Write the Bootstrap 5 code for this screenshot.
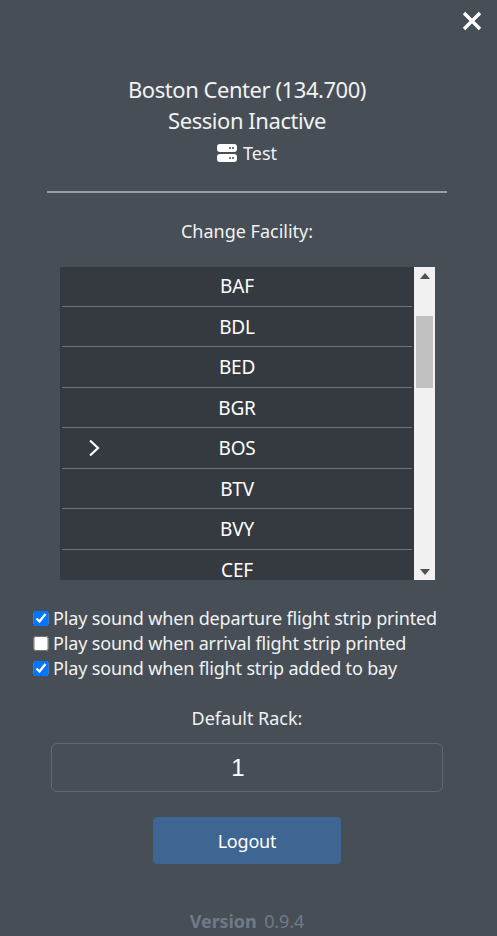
<!DOCTYPE html>
<html lang="en">
<head>
<meta charset="utf-8">
<title>Settings</title>
<link href="https://cdn.jsdelivr.net/npm/bootstrap@5.3.0/dist/css/bootstrap.min.css" rel="stylesheet">
<style>
html,body{height:936px;overflow:hidden;}
body{background:#474e56;color:#f1f2f3;font-family:"Noto Sans",sans-serif;font-size:18px;letter-spacing:0;}
.panel{padding:11px 50px 0 47px;height:936px;overflow:hidden;}
.close-row{height:21px;margin-right:-35px;margin-top:0;}
.head-block{margin-top:42px;line-height:31px;font-size:22px;letter-spacing:-.45px;}
.server-line{font-size:18px;line-height:32px;letter-spacing:0;margin-top:1px;gap:6px;}
.rule-line{border-top:2px solid #9a9ea3;margin:22px 0 0;opacity:1;}
.facility-label{margin-top:26px;line-height:24px;}
.picker{margin:24px 12px 0 13px;height:313px;}
.fac-list{width:354px;height:313px;background:#343a40;padding-top:.02px;}
.fac-row{height:40.5px;margin:0 2px;border-bottom:1px solid #6f747b;color:#fff;font-size:19px;letter-spacing:-.2px;line-height:40px;position:relative;}
.fac-row:first-child{margin-top:-1px;}
.fac-row:last-child{border-bottom:0;height:30.5px;padding-top:10px;line-height:21px;}
.chev{position:absolute;left:26px;top:11px;}
.sbar{width:21px;height:313px;background:#f1f1f1;}
.sthumb{height:72px;margin:32px 2px 0;background:#c1c1c1;}
.sup,.sdown{width:21px;height:17px;}
.sflex{flex:1;}
.checks{margin:26px 0 0 -14px;font-size:18px;letter-spacing:-.16px;line-height:25px;white-space:nowrap;}
.checks input{width:15.5px;height:15.5px;margin:0 4.5px 0 0;flex:none;}
.checks label{margin:0;}
.rack-label{margin-top:25px;line-height:24px;}
.rack-input{display:block;width:392px;height:49px;margin:13px 0 0 4px;background:transparent;border:1px solid #626972;border-radius:6px;color:#fff;text-align:center;font-family:"Liberation Sans",sans-serif;font-size:24px;padding:0 18px 0 0;letter-spacing:0;outline:0;}
.logout-btn{width:188px;height:47px;margin-top:25px;background:#3f6592;border:0;border-radius:4px;color:#fff;font-size:18px;letter-spacing:-.2px;padding:2px 0 0;}
.ver{margin-top:45px;color:#6f7b88;font-size:18px;letter-spacing:-.1px;line-height:24px;}
.ver b{font-weight:700;margin-right:3px;}
</style>
</head>
<body>
<div class="panel">
  <div class="close-row d-flex justify-content-end">
    <svg width="20" height="20" viewBox="0 0 20 20" aria-label="Close"><path d="M2 2 L18 18 M18 2 L2 18" stroke="#fff" stroke-width="3.4" fill="none"/></svg>
  </div>
  <div class="head-block text-center">
    <div>Boston Center (134.700)</div>
    <div>Session Inactive</div>
    <div class="server-line d-flex justify-content-center align-items-center">
      <svg width="20" height="18" viewBox="0 0 20 18"><path fill-rule="evenodd" fill="#fff" d="M3 0H17A3 3 0 0 1 20 3V5A3 3 0 0 1 17 8H3A3 3 0 0 1 0 5V3A3 3 0 0 1 3 0ZM3 10H17A3 3 0 0 1 20 13V15A3 3 0 0 1 17 18H3A3 3 0 0 1 0 15V13A3 3 0 0 1 3 10Z"/><circle cx="13" cy="4" r="1" fill="#474e56"/><circle cx="16" cy="4" r="1" fill="#474e56"/><circle cx="13" cy="14" r="1" fill="#474e56"/><circle cx="16" cy="14" r="1" fill="#474e56"/></svg>
      <span>Test</span>
    </div>
  </div>
  <hr class="rule-line">
  <div class="facility-label text-center">Change Facility:</div>
  <div class="picker d-flex">
    <div class="fac-list text-center">
      <div class="fac-row">BAF</div>
      <div class="fac-row">BDL</div>
      <div class="fac-row">BED</div>
      <div class="fac-row">BGR</div>
      <div class="fac-row"><svg class="chev" width="12" height="18" viewBox="0 0 12 18"><path d="M2 1.5 L10 9 L2 16.5" stroke="#fff" stroke-width="2.2" fill="none"/></svg>BOS</div>
      <div class="fac-row">BTV</div>
      <div class="fac-row">BVY</div>
      <div class="fac-row">CEF</div>
    </div>
    <div class="sbar d-flex flex-column">
      <div class="sup d-flex align-items-center justify-content-center"><svg width="10" height="6" viewBox="0 0 10 6"><path d="M5 0 L10 6 H0Z" fill="#505050"/></svg></div>
      <div class="sthumb"></div>
      <div class="sflex"></div>
      <div class="sdown d-flex align-items-center justify-content-center"><svg width="10" height="6" viewBox="0 0 10 6"><path d="M0 0 H10 L5 6Z" fill="#505050"/></svg></div>
    </div>
  </div>
  <div class="checks">
    <div class="d-flex align-items-center"><input type="checkbox" id="c1" checked><label for="c1">Play sound when departure flight strip printed</label></div>
    <div class="d-flex align-items-center"><input type="checkbox" id="c2"><label for="c2">Play sound when arrival flight strip printed</label></div>
    <div class="d-flex align-items-center"><input type="checkbox" id="c3" checked><label for="c3">Play sound when flight strip added to bay</label></div>
  </div>
  <div class="rack-label text-center">Default Rack:</div>
  <input class="rack-input" type="text" value="1" aria-label="Default Rack">
  <div class="text-center"><button class="btn logout-btn" type="button">Logout</button></div>
  <div class="ver text-center"><b>Version</b> 0.9.4</div>
</div>
<script src="https://cdn.jsdelivr.net/npm/bootstrap@5.3.0/dist/js/bootstrap.bundle.min.js"></script>
</body>
</html>
